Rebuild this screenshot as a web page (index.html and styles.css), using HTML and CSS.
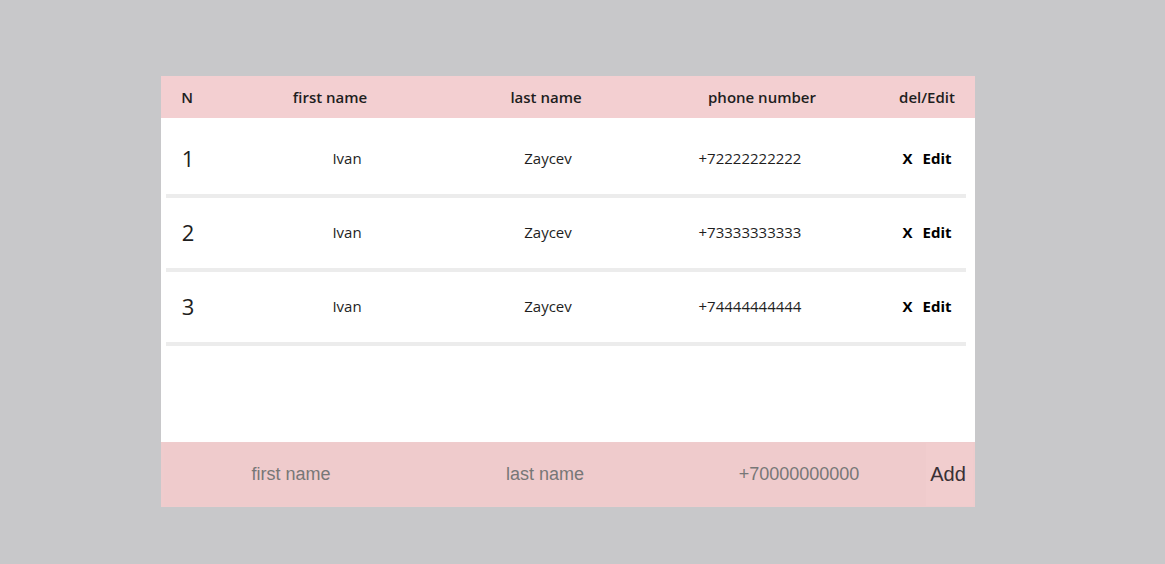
FILE: index.html
```html
<!DOCTYPE html>
<html lang="en">
<head>
<meta charset="utf-8">
<title>Contacts</title>
<link rel="stylesheet" href="styles.css">
</head>
<body>
<div class="page">
  <div class="card">
    <div class="head">
      <div class="hc">N</div>
      <div class="hc">first name</div>
      <div class="hc">last name</div>
      <div class="hc">phone number</div>
      <div class="hc">del/Edit</div>
    </div>
    <div class="list">
      <div class="row">
        <div class="num">1</div>
        <div class="cell">Ivan</div>
        <div class="cell">Zaycev</div>
        <div class="cell">+72222222222</div>
        <div class="acts"><span class="del">X</span><span class="edit">Edit</span></div>
      </div>
      <div class="row">
        <div class="num">2</div>
        <div class="cell">Ivan</div>
        <div class="cell">Zaycev</div>
        <div class="cell">+73333333333</div>
        <div class="acts"><span class="del">X</span><span class="edit">Edit</span></div>
      </div>
      <div class="row">
        <div class="num">3</div>
        <div class="cell">Ivan</div>
        <div class="cell">Zaycev</div>
        <div class="cell">+74444444444</div>
        <div class="acts"><span class="del">X</span><span class="edit">Edit</span></div>
      </div>
    </div>
    <form class="add">
      <input class="inp" type="text" placeholder="first name">
      <input class="inp" type="text" placeholder="last name">
      <input class="inp" type="text" placeholder="+70000000000">
      <button class="btn" type="button">Add</button>
    </form>
  </div>
</div>
</body>
</html>
```

FILE: styles.css
```css
html, body {
  margin: 0;
  padding: 0;
  background: #c8c8ca;
}
.page {
  padding: 76px 0 0 161px;
  height: 564px;
  box-sizing: border-box;
}
.card {
  width: 814px;
  background: #ffffff;
  display: flex;
  flex-direction: column;
}
.head {
  height: 42px;
  background: #f3cfd1;
  display: grid;
  grid-template-columns: 52px 234px 198px 234px 96px;
  align-items: center;
  font-family: "Open Sans", "Noto Sans", sans-serif;
  font-weight: 600;
  font-size: 15px;
  color: #1e1e1e;
}
.hc {
  text-align: center;
}
.list {
  height: 324px;
  padding: 6px 9px 0 5px;
  box-sizing: border-box;
}
.row {
  height: 74px;
  box-sizing: border-box;
  padding-bottom: 3px;
  border-bottom: 4px solid #ececec;
  display: grid;
  grid-template-columns: 44px 274px 128px 276px 78px;
  align-items: center;
  font-family: "Open Sans", "Noto Sans", sans-serif;
  font-size: 15px;
  color: #1e1e1e;
}
.num {
  text-align: center;
  font-size: 22px;
  font-weight: 400;
}
.cell {
  text-align: center;
}
.acts {
  text-align: center;
  font-weight: 700;
  font-size: 15px;
  color: #000;
}
.del {
  margin-right: 10px;
}
.add {
  margin: 0;
  height: 65px;
  background: #efcccd;
  display: flex;
  align-items: center;
  padding: 0 2px 0 3px;
}
.inp {
  width: 254px;
  height: 63px;
  box-sizing: border-box;
  border: none;
  outline: none;
  background: #efcbcc;
  text-align: center;
  font-family: "Liberation Sans", Arial, sans-serif;
  font-size: 18px;
  color: #333;
  padding: 0;
}
.inp::placeholder {
  color: #777777;
}
.btn {
  width: 47px;
  height: 63px;
  border: none;
  background: #f1cdce;
  font-family: "Liberation Sans", Arial, sans-serif;
  font-size: 20px;
  color: #3a3035;
  padding: 0 3px 0 0;
  cursor: pointer;
}
```
